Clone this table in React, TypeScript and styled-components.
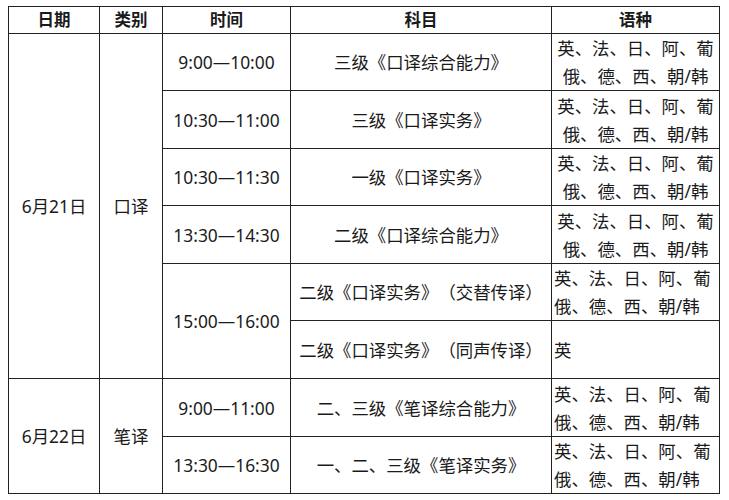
import React from "react";
import styled, { createGlobalStyle } from "styled-components";

const Global = createGlobalStyle`
  html, body { margin: 0; padding: 0; background: #fff; }
  body {
    font-family: "Noto Sans", "Noto Sans CJK SC", sans-serif;
    color: #1a1a1a;
    text-spacing-trim: space-all;
    font-feature-settings: "chws" 0, "halt" 0, "palt" 0;
  }
`;

const Page = styled.div`
  padding: 6px 0 0 8px;
`;

const Table = styled.table`
  border-collapse: collapse;
  table-layout: fixed;
  width: 711px;
  font-size: 17.4px;
`;

const HeadCell = styled.th`
  border: 1.5px solid #222;
  font-weight: 700;
  font-size: 16.5px;
  padding: 0;
  text-align: center;
  vertical-align: middle;
  line-height: 20px;
`;

const Cell = styled.td<{ $align?: "left" | "center" }>`
  border: 1.5px solid #222;
  padding: 0 2px;
  text-align: ${(p) => p.$align ?? "center"};
  vertical-align: middle;
  line-height: 28px;
  white-space: nowrap;
`;

const Row = styled.tr<{ $h: number }>`
  height: ${(p) => p.$h}px;
`;

const Langs: React.FC<{ align?: "left" | "center" }> = ({ align = "center" }) => (
  <Cell $align={align}>
    英、法、日、阿、葡
    <br />
    俄、德、西、朝/韩
  </Cell>
);

export default function App() {
  return (
    <Page>
      <Global />
      <Table>
        <colgroup>
          <col style={{ width: 91 }} />
          <col style={{ width: 63 }} />
          <col style={{ width: 128 }} />
          <col style={{ width: 261 }} />
          <col style={{ width: 168 }} />
        </colgroup>
        <thead>
          <Row $h={27}>
            <HeadCell>日期</HeadCell>
            <HeadCell>类别</HeadCell>
            <HeadCell>时间</HeadCell>
            <HeadCell>科目</HeadCell>
            <HeadCell>语种</HeadCell>
          </Row>
        </thead>
        <tbody>
          <Row $h={56}>
            <Cell rowSpan={6}>6月21日</Cell>
            <Cell rowSpan={6}>口译</Cell>
            <Cell>9:00—10:00</Cell>
            <Cell>三级《口译综合能力》</Cell>
            <Langs />
          </Row>
          <Row $h={58}>
            <Cell>10:30—11:00</Cell>
            <Cell>三级《口译实务》</Cell>
            <Langs />
          </Row>
          <Row $h={57}>
            <Cell>10:30—11:30</Cell>
            <Cell>一级《口译实务》</Cell>
            <Langs />
          </Row>
          <Row $h={58}>
            <Cell>13:30—14:30</Cell>
            <Cell>二级《口译综合能力》</Cell>
            <Langs />
          </Row>
          <Row $h={57}>
            <Cell rowSpan={2}>15:00—16:00</Cell>
            <Cell>二级《口译实务》（交替传译）</Cell>
            <Langs align="left" />
          </Row>
          <Row $h={58}>
            <Cell>二级《口译实务》（同声传译）</Cell>
            <Cell $align="left">英</Cell>
          </Row>
          <Row $h={58}>
            <Cell rowSpan={2}>6月22日</Cell>
            <Cell rowSpan={2}>笔译</Cell>
            <Cell>9:00—11:00</Cell>
            <Cell>二、三级《笔译综合能力》</Cell>
            <Langs align="left" />
          </Row>
          <Row $h={57}>
            <Cell>13:30—16:30</Cell>
            <Cell>一、二、三级《笔译实务》</Cell>
            <Langs align="left" />
          </Row>
        </tbody>
      </Table>
    </Page>
  );
}
